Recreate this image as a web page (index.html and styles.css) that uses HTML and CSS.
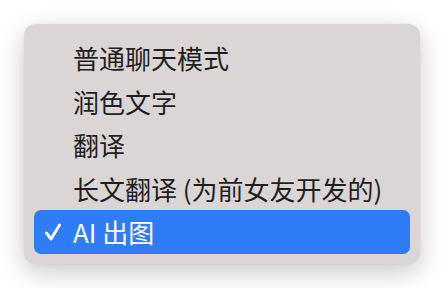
FILE: index.html
```html
<!DOCTYPE html>
<html lang="zh-CN">
<head>
    <meta charset="UTF-8">
    <title>模式菜单</title>
    <link rel="stylesheet" href="styles.css">
</head>
<body>
    <ul class="menu">
        <li class="item"><span class="check"></span>普通聊天模式</li>
        <li class="item"><span class="check"></span>润色文字</li>
        <li class="item"><span class="check"></span>翻译</li>
        <li class="item"><span class="check"></span>长文翻译 (为前女友开发的)</li>
        <li class="item selected">
            <span class="check">
                <svg width="18" height="20" viewBox="0 0 18 20"><path d="M2.5 11 L7 17 L15.5 3" fill="none" stroke="#fff" stroke-width="3" stroke-linecap="round" stroke-linejoin="round"/></svg>
            </span>AI 出图
        </li>
    </ul>
</body>
</html>
```

FILE: styles.css
```css
body {
    margin: 0;
    padding: 24px;
    background: #fff;
    font-family: "Noto Sans CJK SC", "Noto Sans", sans-serif;
}
.menu {
    list-style: none;
    margin: 0;
    width: 376px;
    padding: 12px 10px 10px;
    background: #dbd5d5;
    border-radius: 12px;
    box-shadow: 0 8px 26px rgba(0, 0, 0, 0.22), 0 0 2px rgba(0, 0, 0, 0.08);
}
.item {
    display: flex;
    align-items: center;
    height: 43.5px;
    font-size: 26px;
    color: #1f1f1f;
    border-radius: 7px;
}
.check {
    width: 39px;
    display: flex;
    justify-content: center;
    padding-right: 2px;
    box-sizing: border-box;
}
.selected {
    background: #307cf8;
    color: #fff;
}
```
